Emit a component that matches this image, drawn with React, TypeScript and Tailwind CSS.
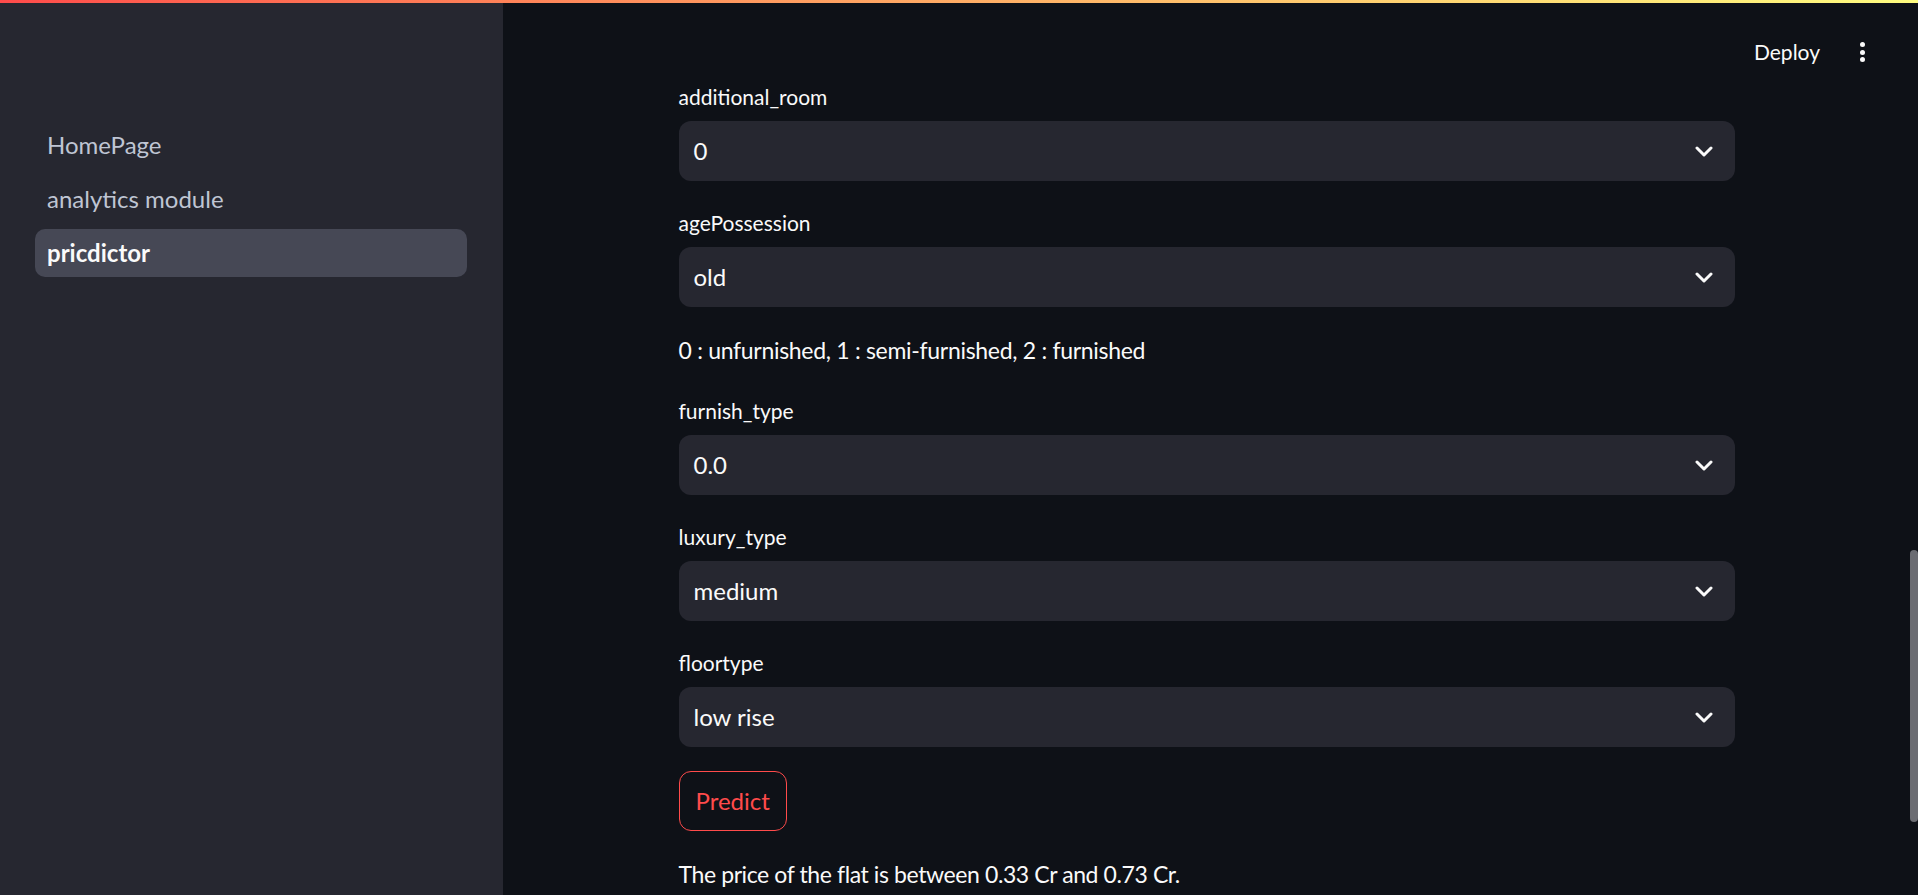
const fields = [
  { label: 'additional_room', value: '0' },
  { label: 'agePossession', value: 'old' },
]

const fields2 = [
  { label: 'furnish_type', value: '0.0' },
  { label: 'luxury_type', value: 'medium' },
  { label: 'floortype', value: 'low rise' },
]

const pages = ['HomePage', 'analytics module', 'pricdictor']

function Chevron() {
  return (
    <svg width="18" height="11" viewBox="0 0 18 11" fill="none">
      <path d="M2 2l7 7 7-7" stroke="#fafafa" strokeWidth="3" strokeLinecap="round" strokeLinejoin="round" />
    </svg>
  )
}

function SelectBox({ label, value }: { label: string; value: string }) {
  return (
    <div>
      <div className="h-[36px] mb-[6px] text-[21px] leading-[36px] text-[#fafafa]">{label}</div>
      <div className="h-[60px] rounded-[12px] bg-[#262730] flex items-center justify-between pl-[15px] pr-[22px]">
        <span className="text-[24px] text-[#fafafa]">{value}</span>
        <Chevron />
      </div>
    </div>
  )
}

export default function App() {
  return (
    <div
      className="relative h-[895px] w-full overflow-hidden bg-[#0e1117] flex"
      style={{ fontFamily: '"Source Sans Pro", Lato, "Noto Sans", sans-serif' }}
    >
      <div className="absolute top-0 left-0 right-0 h-[3px] bg-gradient-to-r from-[#ff4b4b] to-[#fffd80]" />

      <aside className="w-[503px] shrink-0 bg-[#262730] pt-[121px] px-[35px]">
        <nav className="flex flex-col gap-[6px] w-[432px]">
          {pages.map((p, i) => (
            <div
              key={i}
              className={
                i === 2
                  ? 'h-[48px] rounded-[10px] bg-[#464855] pl-[12px] flex items-center text-[24px] font-bold text-[#fafafa]'
                  : 'h-[48px] rounded-[10px] pl-[12px] flex items-center text-[24px] text-[#bfc5d3]'
              }
            >
              {p}
            </div>
          ))}
        </nav>
      </aside>

      <main className="relative flex-1 flex justify-center">
        <div className="absolute top-[36px] right-[45px] flex items-center h-[32px]">
          <span className="text-[21px] text-[#fafafa] mr-[40px]">Deploy</span>
          <div className="flex flex-col gap-[2.5px]">
            <span className="w-[5px] h-[5px] rounded-full bg-[#fafafa]" />
            <span className="w-[5px] h-[5px] rounded-full bg-[#fafafa]" />
            <span className="w-[5px] h-[5px] rounded-full bg-[#fafafa]" />
          </div>
        </div>

        <div className="w-[1056px] pt-[79px] flex flex-col gap-[24px]">
          {fields.map((f, i) => (
            <SelectBox key={i} label={f.label} value={f.value} />
          ))}
          <p className="text-[23px] leading-[38px] tracking-[-0.3px] text-[#fafafa]">
            0 : unfurnished, 1 : semi-furnished, 2 : furnished
          </p>
          {fields2.map((f, i) => (
            <SelectBox key={i} label={f.label} value={f.value} />
          ))}
          <div>
            <button className="h-[60px] px-[16px] rounded-[12px] border border-[#ff4b4b] text-[24px] text-[#ff4b4b] bg-transparent">
              Predict
            </button>
          </div>
          <p className="text-[23px] leading-[38px] tracking-[-0.4px] text-[#fafafa]">
            The price of the flat is between 0.33 Cr and 0.73 Cr.
          </p>
        </div>
      </main>

      <div className="w-[8px] shrink-0 pt-[550px]">
        <div className="h-[272px] w-[8px] rounded-full bg-[#6b6c72]" />
      </div>
    </div>
  )
}
